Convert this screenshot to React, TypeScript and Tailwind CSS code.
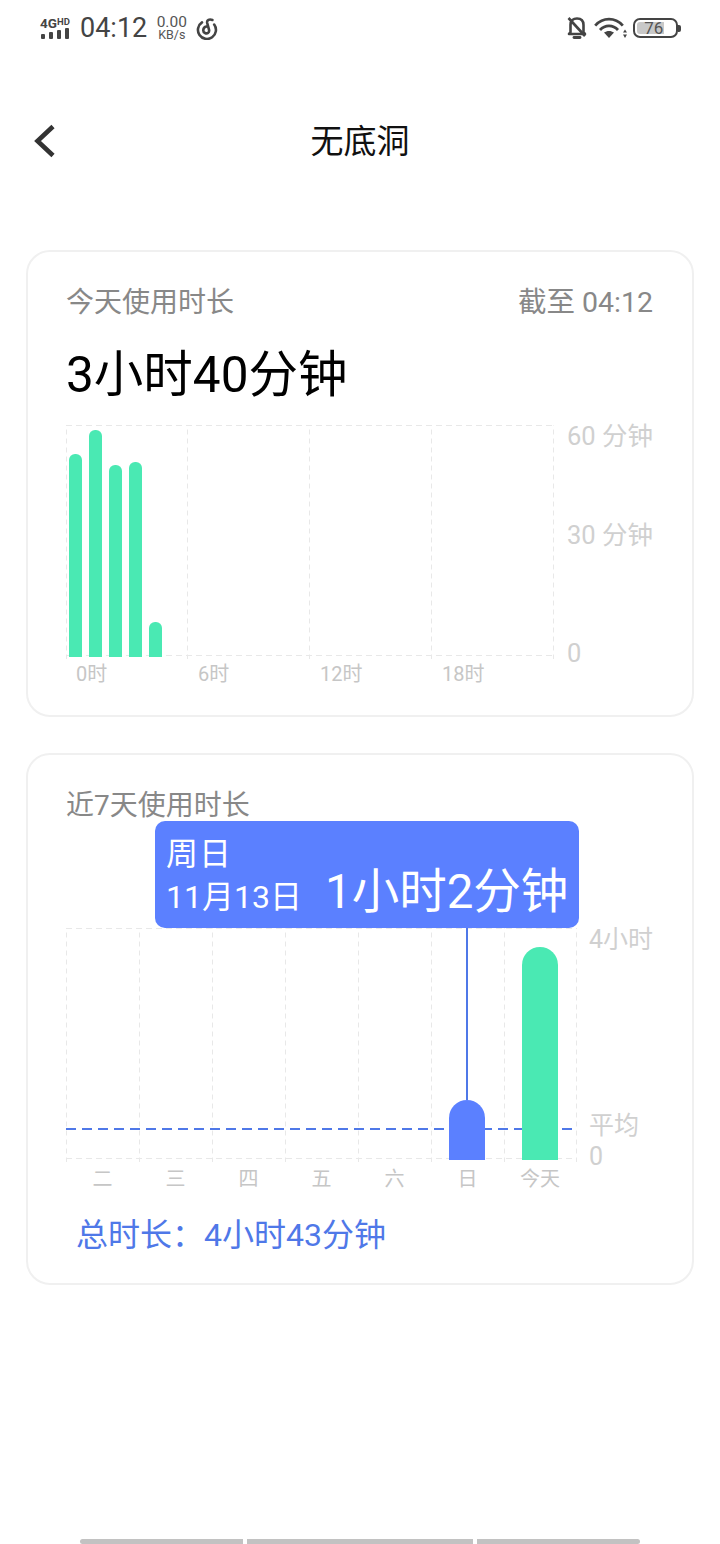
import React from 'react'

const FONT = 'font-[Roboto,"Noto_Sans_CJK_SC",sans-serif]'

const hourBars = [203, 227, 192, 195, 35]
const hourLabels = ['0时', '6时', '12时', '18时', '']
const dayLabels = ['二', '三', '四', '五', '六', '日', '今天', '']

// dashed grid lines, drawn as repeating gradients so the dash length matches
const H_LINES =
  'bg-[linear-gradient(to_right,#e8e8e8_6px,transparent_6px),linear-gradient(to_right,#e8e8e8_6px,transparent_6px)] bg-[length:10px_1px] bg-[position:0_0,0_230px] bg-repeat-x'
const V_LINE =
  'bg-[linear-gradient(to_bottom,#e8e8e8_5px,transparent_5px)] bg-[length:1px_9px] bg-left bg-repeat-y'

function StatusBar() {
  return (
    <div className="flex h-[56px] items-center justify-between pl-[41px] pr-[39px] text-[#444444]">
      <div className="flex items-center">
        <div className="flex w-[30px] flex-col">
          <div className="-ml-[1px] flex h-[11px] items-start font-bold leading-[11px]">
            <span className="text-[13.5px] leading-[11px]">4G</span>
            <span className="text-[9.5px] leading-[8px]">HD</span>
          </div>
          <svg width="29" height="11" viewBox="0 0 29 11" className="mt-[-1px]">
            <rect x="0" y="6" width="4" height="5" rx="1" fill="#444" />
            <rect x="8" y="4" width="4" height="7" rx="1" fill="#444" />
            <rect x="16" y="2" width="4" height="9" rx="1" fill="#444" />
            <rect x="24" y="0" width="4" height="11" rx="1" fill="#444" />
          </svg>
        </div>
        <span className="ml-[9px] text-[27px] leading-none">04:12</span>
        <div className="ml-[8px] flex w-[33px] flex-col items-center text-[#555555]">
          <span className="text-[15.5px] leading-[14px]">0.00</span>
          <span className="text-[12.5px] leading-[12px]">KB/s</span>
        </div>
        <svg width="22" height="22" viewBox="0 0 22 22" fill="none" stroke="#444" strokeWidth="2.6" className="ml-[8px] mt-[1px]" strokeLinecap="round">
          <path d="M6 4.4 A9 9 0 1 0 18.2 6.6" />
          <path d="M16.4 2 C13.4 0.8 10.6 2 11.2 5 L13 11.6 C13.8 15 11 16 9 15 C6.6 14 6.4 9.6 10.4 8.6" />
        </svg>
      </div>
      <div className="flex items-center">
        <svg width="20" height="22" viewBox="0 0 20 22" fill="none" stroke="#444" strokeWidth="2.6">
          <path d="M3.5 15 V8 C3.5 3 6.5 1.5 10 1.5 C13.5 1.5 16.5 3 16.5 8 V15 L18 17 H2 Z" strokeLinejoin="round" />
          <path d="M7 20.5 H13" strokeLinecap="round" strokeWidth="2.8" />
          <path d="M1.5 1 L18 19" />
        </svg>
        <svg width="34" height="22" viewBox="0 0 34 22" fill="none" stroke="#444" strokeWidth="2.8" className="ml-[7px]">
          <path d="M1.2 8.6 C9 0 21 0 28.8 8.6" />
          <path d="M6 13 C11 7.6 19 7.6 24 13" />
          <path d="M10 15.5 L15 21 L20 15.5 C17 13.4 13 13.4 10 15.5 Z" fill="#444" stroke="none" />
          <path d="M31 12.5 L33 15.5 H29 Z M31 21 L33 17.5 H29 Z" fill="#444" stroke="none" />
        </svg>
        <div className="ml-[5px] flex items-center">
          <div className="h-[20px] w-[45px] rounded-[7px] border-2 border-[#444444] p-[2px]">
            <div className="flex h-full w-[74%] items-center justify-center rounded-l-[3px] bg-[#c8c8c8] pl-[6px] text-[17px] leading-none text-[#555555]">
              76
            </div>
          </div>
          <div className="h-[7px] w-[3px] rounded-r-[2px] bg-[#444444]" />
        </div>
      </div>
    </div>
  )
}

function Header() {
  return (
    <div className="relative mt-[54px] flex h-[62px] items-center justify-center">
      <svg width="24" height="34" viewBox="0 0 24 34" fill="none" stroke="#333" strokeWidth="4.6" className="absolute left-[33px] top-[14px]">
        <path d="M20 2.5 L4.5 17 L20 31.5" />
      </svg>
      <span className="text-[33px] leading-none text-[#111111]">无底洞</span>
    </div>
  )
}

function TodayCard() {
  return (
    <div className="mx-[26px] mt-[78px] h-[467px] rounded-[24px] border-2 border-[#f0f0f0] pl-[38px] pr-[39px] pt-[34px]">
      <div className="flex items-center justify-between text-[#888888]">
        <span className="text-[28px] leading-[34px]">今天使用时长</span>
        <span className="text-[28.5px] leading-[34px]">截至 04:12</span>
      </div>
      <div className="mt-[27px] text-[49.5px] leading-[56px] text-black">3小时40分钟</div>
      <div className="mt-[22px] flex">
        <div className="w-[488px]">
          <div className={`grid h-[234px] grid-cols-[121px_122px_122px_122px_1px] ${H_LINES}`}>
            {hourLabels.map((label, i) => (
              <div key={i} className={`flex items-end gap-[7px] pb-[2px] pl-[3px] ${V_LINE}`}>
                {i === 0 &&
                  hourBars.map((h, j) => (
                    <div key={j} className="w-[13px] shrink-0 rounded-t-[6px] bg-[#4ae9b3]" style={{ height: h }} />
                  ))}
              </div>
            ))}
          </div>
          <div className="grid grid-cols-[122px_122px_122px_122px] text-[20px] leading-[24px] text-[#c6c6c6]">
            {hourLabels.slice(0, 4).map((label) => (
              <span key={label} className="pl-[10px] pt-[3px]">
                {label}
              </span>
            ))}
          </div>
        </div>
        <div className="ml-[13px] -mt-[4px] flex flex-col text-[25.5px] leading-[30px] text-[#d0d0d0]">
          <span>60 分钟</span>
          <span className="mt-[69px]">30 分钟</span>
          <span className="mt-[88px]">0</span>
        </div>
      </div>
    </div>
  )
}

function WeekCard() {
  return (
    <div className="mx-[26px] mt-[36px] h-[532px] rounded-[24px] border-2 border-[#f0f0f0] pl-[38px] pt-[34px]">
      <div className="text-[28px] leading-[34px] text-[#888888]">近7天使用时长</div>
      <div className="relative mt-[105px] flex">
        <div className="relative w-[511px]">
          <div className={`grid h-[234px] grid-cols-[73px_73px_73px_73px_73px_73px_72px_1px] ${H_LINES}`}>
            {dayLabels.map((label, i) => (
              <div key={i} className={`flex items-end pb-[2px] pl-[18px] ${V_LINE}`}>
                {label === '日' && <div className="z-10 h-[60px] w-[36px] rounded-t-[18px] bg-[#5b80ff]" />}
                {label === '今天' && <div className="z-10 h-[213px] w-[36px] rounded-t-[18px] bg-[#4ae9b3]" />}
              </div>
            ))}
          </div>
          <div className="absolute left-0 top-[200px] h-[2px] w-[508px] bg-[linear-gradient(to_right,#4f78e8_10px,transparent_10px)] bg-[length:16px_2px] bg-repeat-x" />
          <div className="grid grid-cols-[73px_73px_73px_73px_73px_73px_72px] text-center text-[20px] leading-[24px] text-[#c6c6c6]">
            {dayLabels.slice(0, 7).map((label) => (
              <span key={label} className="pt-[5px]">
                {label}
              </span>
            ))}
          </div>
          <div className="absolute left-[400px] top-0 h-[172px] w-[2px] bg-[#4f78e8]" />
          <div className="absolute -top-[107px] left-[89px] flex h-[107px] w-[424px] flex-col rounded-[10px] bg-[#5b80ff] pl-[11px] text-white">
            <span className="pt-[14px] text-[32px] leading-[38px] tracking-[1px]">周日</span>
            <div className="-mt-[3px] flex items-baseline">
              <span className="text-[32px] leading-[44px]">11月13日</span>
              <span className="ml-[23px] text-[47.5px] leading-[44px]">1小时2分钟</span>
            </div>
          </div>
        </div>
        <div className="relative ml-[12px] flex flex-col text-[25px] leading-[30px] text-[#d0d0d0]">
          <span className="-mt-[3px]">4小时</span>
          <span className="mt-[156px]">平均</span>
          <span className="mt-[1px]">0</span>
        </div>
      </div>
      <div className="ml-[10px] mt-[24px] text-[32px] leading-[40px] text-[#4f78e8]">总时长：4小时43分钟</div>
    </div>
  )
}

export default function App() {
  return (
    <div className={`h-[1544px] w-[720px] overflow-hidden bg-white ${FONT}`}>
      <StatusBar />
      <Header />
      <TodayCard />
      <WeekCard />
      <div className="ml-[80px] mt-[254px] flex h-[5px] w-[560px] gap-[4px]">
        <div className="w-[163px] rounded-l-[3px] bg-[#c2c2c2]" />
        <div className="w-[226px] bg-[#c2c2c2]" />
        <div className="w-[163px] rounded-r-[3px] bg-[#c2c2c2]" />
      </div>
    </div>
  )
}
